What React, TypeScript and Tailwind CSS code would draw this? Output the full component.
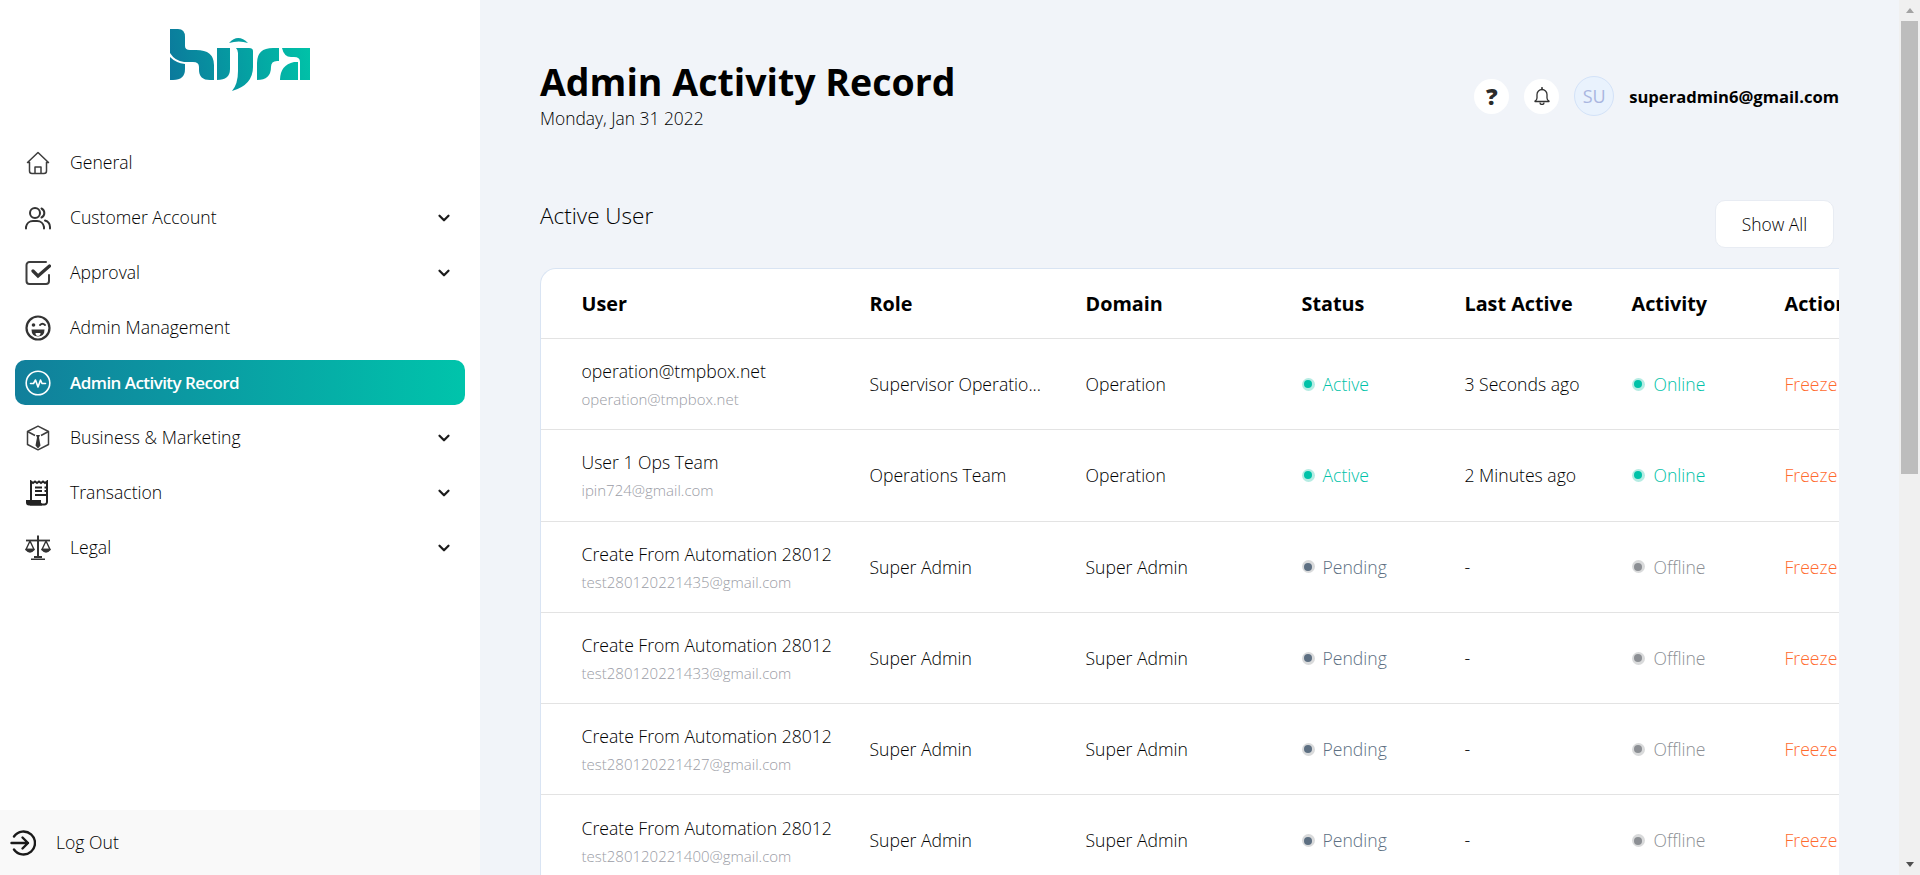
import { ChevronDown } from "lucide-react";

const FONT = "font-['Open_Sans',sans-serif]";

function Logo() {
  return (
    <svg width="140" height="62" viewBox="0 0 140 62">
      <defs>
        <linearGradient id="hijraGrad" gradientUnits="userSpaceOnUse" x1="0" y1="45" x2="140" y2="20">
          <stop offset="0" stopColor="#0b7a9c" />
          <stop offset="1" stopColor="#00c2a8" />
        </linearGradient>
      </defs>
      <g fill="url(#hijraGrad)">
        {/* h */}
        <path d="M0 0h8q7 0 7 8v9q0 4 5 4h6q18 0 18 15v15h-4q-11 0-11-10v-3q0-5-6-5H14q-9-1-14-9z" />
        <path d="M0 28q6 6 15 7v5q0 11-12 11H0z" />
        {/* i */}
        <path d="M47 19h13v21q0 11-13 11z" />
        {/* arc over the i and j */}
        <path d="M59 14q9-10 19 0q-9-3-19 0z" />
        {/* j */}
        <path d="M66 19h13q4 0 4 3v16q0 18-21 24q6-7 6-20V24q0-3-2-5z" />
        {/* r */}
        <path d="M87 51V34q0-15 16-15h6v13q-8-1-8 6q0 13-14 13z" />
        {/* a */}
        <path d="M112 19h28v32h-10V33q0-5-6-5h-3q-7 0-9-9z" />
        <path d="M110 51q0-15 14-18h4v18z" />
      </g>
    </svg>
  );
}

function HomeIcon() {
  return (
    <svg width="24" height="24" viewBox="0 0 24 24" fill="none" stroke="#3d3d3d" strokeWidth="1.5" strokeLinejoin="round">
      <path d="M1.500 11.500 12 1.500l10.500 10-2-.2V20a2.500 2.500 0 0 1-2.500 2.500H6A2.500 2.500 0 0 1 3.500 20v-8.700z" />
      <path d="M9 22.500V16h6v6.500" />
    </svg>
  );
}

function UsersIcon() {
  return (
    <svg width="26" height="24" viewBox="0 0 26 24" fill="none" stroke="#333" strokeWidth="2" strokeLinecap="round">
      <circle cx="10" cy="7" r="5" />
      <path d="M1 22.500v-1.500a7 7 0 0 1 7-6h4a7 7 0 0 1 7 6v1.500" />
      <path d="M16.500 2.500a5 5 0 0 1 0 9" />
      <path d="M20 14.500a7 7 0 0 1 5 6.500v1.500" />
    </svg>
  );
}

function ApprovalIcon() {
  return (
    <svg width="26" height="26" viewBox="0 0 26 26" fill="none" stroke="#3d3d3d" strokeWidth="2" strokeLinecap="round">
      <path d="M21 2H4.500A3 3 0 0 0 1.500 5v16a3 3 0 0 0 3 3H21a3 3 0 0 0 3-3v-6" />
      <path d="m8 11 5 5L24.500 6" strokeWidth="3.200" stroke="#333" />
    </svg>
  );
}

function WinkIcon() {
  return (
    <svg width="26" height="26" viewBox="0 0 26 26" fill="none" stroke="#333" strokeWidth="2.200">
      <circle cx="13" cy="13" r="11.500" />
      <circle cx="8.500" cy="10" r="1.800" fill="#333" stroke="none" />
      <path d="M15 10q2.500-2.500 5 0" strokeWidth="1.800" strokeLinecap="round" />
      <path d="M6.500 14.500h13q0 7-6.500 7t-6.500-7z" fill="#333" stroke="none" />
      <path d="M10.500 18h5q0 3-2.500 3t-2.500-3z" fill="#fff" stroke="none" />
    </svg>
  );
}

function PulseIcon() {
  return (
    <svg width="26" height="26" viewBox="0 0 26 26" fill="none" stroke="#fff" strokeWidth="1.600" strokeLinecap="round" strokeLinejoin="round">
      <circle cx="13" cy="13" r="11.800" />
      <path d="M5.500 13.500h3l2-3.500 2.500 7 2.500-7 1.500 3.500h3.500" />
    </svg>
  );
}

function BoxTieIcon() {
  return (
    <svg width="24" height="26" viewBox="0 0 24 26" fill="none" stroke="#3d3d3d" strokeWidth="1.500" strokeLinejoin="round">
      <path d="M12 1.200 22.500 6.500v13L12 24.800 1.500 19.500v-13z" />
      <path d="M1.500 6.500 9 10.500M22.500 6.500 15 10.500" />
      <path d="M10 10h4l-1 2.500 1.500 8L12 23.500l-2.500-3 1.500-8z" fill="#333" stroke="none" />
    </svg>
  );
}

function ReceiptIcon() {
  return (
    <svg width="24" height="26" viewBox="0 0 24 26" fill="none" stroke="#222" strokeWidth="2">
      <path d="M5 20V1.500l2 1.500 2-1.500 2 1.500 2-1.500 2 1.500 2-1.500 2 1.500 2-1.500V22a2.500 2.500 0 0 1-2.500 2.500H4" />
      <path d="M1 21h13v1.500a2 2 0 0 0 2 2H3a2 2 0 0 1-2-2z" fill="#222" />
      <path d="M9 7.500h7M9 11h7M18.500 7.500h1.500M18.500 11h1.500M9 15h11" strokeWidth="1.800" />
    </svg>
  );
}

function ScaleIcon() {
  return (
    <svg width="26" height="26" viewBox="0 0 26 26" fill="none" stroke="#333" strokeWidth="1.400" strokeLinejoin="round">
      <path d="M13 0.500V21" strokeWidth="2" />
      <path d="M1 5.500h24" strokeWidth="1.800" />
      <path d="M5 6 1 14.500h8zM21 6l-4 8.500h8z" />
      <path d="M1 14.500q4 5 8 0zM17 14.500q4 5 8 0z" fill="#333" />
      <path d="M9 21h8v2H9zM6 23.500h14V25H6z" fill="#333" stroke="none" />
    </svg>
  );
}

function LogoutIcon() {
  return (
    <svg width="26" height="26" viewBox="0 0 26 26" fill="none" stroke="#1a1a1a" strokeWidth="2.400" strokeLinecap="round" strokeLinejoin="round">
      <path d="M4 6.500a11.500 11.500 0 1 1 0 13" />
      <path d="M1.500 13H18M12.500 7.500 18 13l-5.500 5.500" />
    </svg>
  );
}

function HelpIcon() {
  return (
    <span className="text-[23px] font-extrabold leading-none text-[#2b2b2b]">?</span>
  );
}

function BellIcon() {
  return (
    <svg width="16" height="18" viewBox="0 0 16 18" fill="none" stroke="#333" strokeWidth="1.300" strokeLinejoin="round">
      <path d="M8 2.500a5 5 0 0 0-5 5v3.500q0 2-2 3v.5h14V14q-2-1-2-3V7.500a5 5 0 0 0-5-5z" />
      <path d="M8 .700v1.800" strokeLinecap="round" strokeWidth="1.600" />
      <path d="M6 15.500a2 2 0 0 0 4 0" />
    </svg>
  );
}

const MENU = [
  { label: "General", icon: <HomeIcon /> },
  { label: "Customer Account", icon: <UsersIcon />, more: true },
  { label: "Approval", icon: <ApprovalIcon />, more: true },
  { label: "Admin Management", icon: <WinkIcon /> },
  { label: "Admin Activity Record", icon: <PulseIcon />, active: true },
  { label: "Business & Marketing", icon: <BoxTieIcon />, more: true },
  { label: "Transaction", icon: <ReceiptIcon />, more: true },
  { label: "Legal", icon: <ScaleIcon />, more: true },
];

const USERS = [
  { name: "operation@tmpbox.net", email: "operation@tmpbox.net", role: "Supervisor Operatio...", domain: "Operation", status: "Active", last: "3 Seconds ago", online: true },
  { name: "User 1 Ops Team", email: "ipin724@gmail.com", role: "Operations Team", domain: "Operation", status: "Active", last: "2 Minutes ago", online: true },
  { name: "Create From Automation 28012", email: "test280120221435@gmail.com", role: "Super Admin", domain: "Super Admin", status: "Pending", last: "-", online: false },
  { name: "Create From Automation 28012", email: "test280120221433@gmail.com", role: "Super Admin", domain: "Super Admin", status: "Pending", last: "-", online: false },
  { name: "Create From Automation 28012", email: "test280120221427@gmail.com", role: "Super Admin", domain: "Super Admin", status: "Pending", last: "-", online: false },
  { name: "Create From Automation 28012", email: "test280120221400@gmail.com", role: "Super Admin", domain: "Super Admin", status: "Pending", last: "-", online: false },
];

const COLS = "grid grid-cols-[288px_216px_216px_163px_167px_153px_120px] pl-[40.500px]";

function Sidebar() {
  return (
    <aside className="flex w-[480px] shrink-0 flex-col bg-white">
      <div className="flex h-[140px] items-start justify-center pt-[29px]">
        <Logo />
      </div>
      <nav className="flex flex-col gap-[10px] px-[15px]">
        {MENU.map((m) => (
          <div
            key={m.label}
            className={
              m.active
                ? "flex h-[45px] items-center rounded-[10px] bg-gradient-to-r from-[#117f9b] to-[#00c4ab] pl-[10px] pr-[12px] text-white"
                : "flex h-[45px] items-center pl-[10px] pr-[12px] font-light text-black"
            }
          >
            <span className="flex w-[26px] justify-center">{m.icon}</span>
            <span className={m.active ? "ml-[19px] flex-1 text-[17px] font-semibold tracking-[-0.55px]" : "ml-[19px] flex-1 text-[17.6px]"}>{m.label}</span>
            {m.more && <ChevronDown size={18} strokeWidth={3} className="text-[#1c1c1c]" />}
          </div>
        ))}
      </nav>
      <div className="mt-auto flex h-[65px] items-center bg-[#f9f9f9] pl-[10px]">
        <LogoutIcon />
        <span className="ml-[20px] text-[17.6px] font-light text-black">Log Out</span>
      </div>
    </aside>
  );
}

function Dot({ on }: { on: boolean }) {
  return (
    <span
      className={
        on
          ? "flex size-[13px] items-center justify-center rounded-full bg-[#b5ece3]"
          : "flex size-[13px] items-center justify-center rounded-full bg-[#d9dadb]"
      }
    >
      <span className={on ? "size-[8px] rounded-full bg-[#00c2a8]" : "size-[8px] rounded-full bg-current"} />
    </span>
  );
}

function Row({ u }: { u: (typeof USERS)[number] }) {
  return (
    <div className={`${COLS} h-[91.3px] items-center border-b-[1.5px] border-[#e3e3e3] text-[17.6px] font-light text-black`}>
      <div>
        <div className="whitespace-nowrap leading-[24px]">{u.name}</div>
        <div className="mt-[6px] text-[15px] leading-[20px] text-[#9a9ca5]">{u.email}</div>
      </div>
      <div className="whitespace-nowrap">{u.role}</div>
      <div>{u.domain}</div>
      <div className={u.status === "Active" ? "flex items-center gap-[8px] text-[#00c2a8]" : "flex items-center gap-[8px] text-[#5d6f82]"}>
        <Dot on={u.status === "Active"} />
        <span>{u.status}</span>
      </div>
      <div>{u.last}</div>
      <div className={u.online ? "flex items-center gap-[9px] text-[#00c2a8]" : "flex items-center gap-[9px] text-[#8c8f94]"}>
        <Dot on={u.online} />
        <span>{u.online ? "Online" : "Offline"}</span>
      </div>
      <div className="text-[#ff6a2d]">Freeze</div>
    </div>
  );
}

export default function App() {
  return (
    <div className={`${FONT} flex h-[875px] overflow-hidden bg-[#f1f4f9]`}>
      <Sidebar />
      <main className="min-w-0 flex-1 px-[60px]">
        <header className="flex items-start justify-between pt-[56px]">
          <div>
            <h1 className="text-[37.500px] font-bold leading-[52px] text-black">Admin Activity Record</h1>
            <p className="mt-[-2px] text-[17.400px] font-light leading-[24px] text-black">Monday, Jan 31 2022</p>
          </div>
          <div className="mt-[20px] flex items-center">
            <span className="flex size-[35px] items-center justify-center rounded-full bg-white"><HelpIcon /></span>
            <span className="ml-[15px] flex size-[35px] items-center justify-center rounded-full bg-white"><BellIcon /></span>
            <span className="ml-[15px] flex size-[40px] items-center justify-center rounded-full border border-[#d3e2f8] bg-[#e9f2fd] text-[18px] text-[#a9b6e0]">SU</span>
            <span className="ml-[15px] pt-[2px] text-[16.600px] font-bold leading-[22px] text-black">superadmin6@gmail.com</span>
          </div>
        </header>

        <section className="mt-[70px]">
          <div className="flex items-start justify-between pr-[5px]">
            <h2 className="pt-[1px] text-[22.500px] font-light leading-[30px] text-black">Active User</h2>
            <button className="h-[48px] w-[119px] rounded-[10px] border border-[#e8ecf3] bg-white text-[17.400px] font-light text-black">Show All</button>
          </div>
          <div className="mt-[20px] overflow-hidden rounded-tl-[16px] border-l border-t border-[#d9e4f3] bg-white">
            <div className={`${COLS} h-[70px] items-center border-b-[1.5px] border-[#e3e3e3] text-[19.800px] font-bold text-black`}>
              <div>User</div>
              <div>Role</div>
              <div>Domain</div>
              <div>Status</div>
              <div>Last Active</div>
              <div>Activity</div>
              <div>Action</div>
            </div>
            {USERS.map((u) => <Row key={u.email} u={u} />)}
          </div>
        </section>
      </main>
      {/* scrollbar */}
      <div className="flex w-[21px] shrink-0 flex-col items-center bg-[#f0f0f0]">
        <div className="flex h-[21px] items-center justify-center">
          <span className="border-x-[4.500px] border-b-[5px] border-x-transparent border-b-[#a3a3a3]" />
        </div>
        <div className="h-[453px] w-[17px] bg-[#bdbdbd]" />
        <div className="mt-auto flex h-[21px] items-center justify-center">
          <span className="border-x-[4.500px] border-t-[5px] border-x-transparent border-t-[#505050]" />
        </div>
      </div>
    </div>
  );
}
